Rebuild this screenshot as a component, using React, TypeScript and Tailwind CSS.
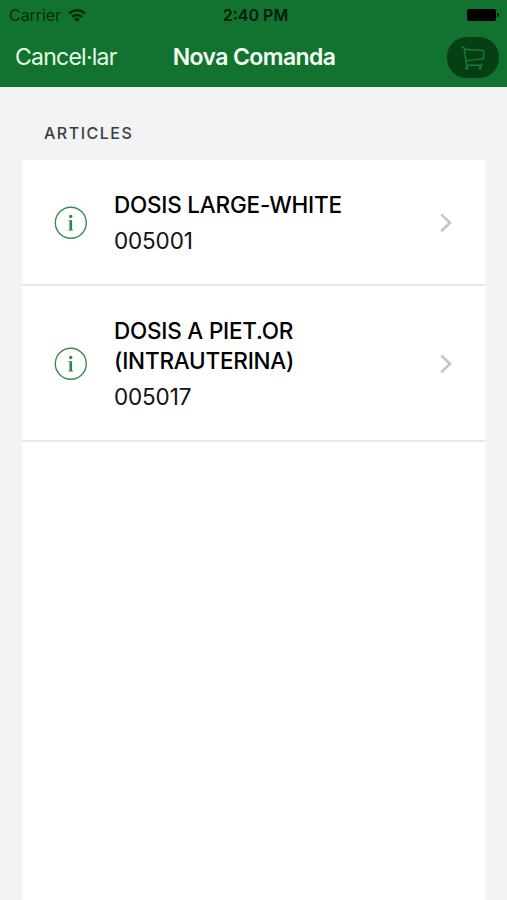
import React from 'react';

/**
 * Row of the articles list
 */
interface ArticleRowProps {
  lines: string[];
  code: string;
}

const InfoIcon = () => (
  <svg className="w-[34px] h-[34px] shrink-0" viewBox="0 0 34 34" fill="none">
    <circle cx="16.8" cy="16.8" r="15.5" stroke="#348c4c" strokeWidth="1.4" />
    <circle cx="16.7" cy="10.4" r="1.7" fill="#2b8544" />
    <path d="M14.4 14.2H18.1V23.8H19.2V24.6H14.2V23.8H15.5V15.1H14.4Z" fill="#2b8544" />
  </svg>
);

const Chevron = () => (
  <svg className="w-3 h-5 shrink-0" viewBox="0 0 12 20" fill="none">
    <path d="M1.2 1.4L10 9.8L1.2 18.2" stroke="#c6c6c8" strokeWidth="2.6" />
  </svg>
);

const ArticleRow: React.FC<ArticleRowProps> = ({ lines, code }) => {
  return (
    <li className="flex items-center border-b-2 border-[#e8e8e9] pl-8 pr-[33px] pt-[30px] pb-7">
      <InfoIcon />
      <div className="ml-[26px] grow">
        <h3 className="text-[22.5px] leading-[30px] font-medium tracking-[-0.22px] text-black">
          {lines.map((line) => (
            <span key={line} className="block whitespace-nowrap">{line}</span>
          ))}
        </h3>
        <p className="mt-1.5 text-[22.5px] leading-[30px] tracking-[-0.15px] text-[#111111]">{code}</p>
      </div>
      <Chevron />
    </li>
  );
};

const StatusBar = () => (
  <div className="grid grid-cols-3 items-center h-[30px] pl-[9px] pr-2 text-[#022d0c]">
    <div className="flex items-center gap-[7px]">
      <span className="text-base tracking-[-0.05px]">Carrier</span>
      <svg className="w-[18px] h-[13px]" viewBox="0 0 18 13" fill="none" stroke="currentColor" strokeWidth="2.4">
        <path d="M1 4.6C5.4 0.1 12.6 0.1 17 4.6" />
        <path d="M4 8.1C6.8 5.3 11.2 5.3 14 8.1" />
        <path d="M9 12.8L6 9.9C7.7 8.3 10.3 8.3 12 9.9Z" fill="currentColor" stroke="none" />
      </svg>
    </div>
    <span className="pl-[3px] text-center text-base font-semibold text-[#011c07]">2:40 PM</span>
    <div className="flex items-center justify-end gap-px">
      <div className="w-[29px] h-3 rounded-[2px] bg-black" />
      <div className="w-[2px] h-1 rounded-r-full bg-black" />
    </div>
  </div>
);

const NavBar = () => (
  <div className="grid grid-cols-[1fr_auto_1fr] items-center h-[55px] pl-[9px] pr-2">
    <button className="pl-[6px] pb-0.5 text-left text-[23px] leading-7 tracking-[-0.75px] text-[#e6fbe4]">Cancel·lar</button>
    <h1 className="pb-0.5 text-[23px] leading-7 font-semibold tracking-[-0.6px] text-[#f3fff2]">Nova Comanda</h1>
    <button className="justify-self-end flex items-center justify-center w-[52px] h-[41px] rounded-[20px] bg-[#053f13]">
      <svg className="w-6 h-6" viewBox="0 0 24 24" fill="none" stroke="#1a7c38" strokeWidth="1.4">
        <path d="M0.4 0.8L3 1.4L5.6 19.2H22" />
        <path d="M3.4 3.2L22.6 4.6V12.6L5 14.9" />
        <circle cx="5.8" cy="22" r="1.1" />
        <circle cx="19.2" cy="22" r="1.1" />
      </svg>
    </button>
  </div>
);

const App = () => {
  return (
    <div className="flex flex-col h-[900px] w-[507px] overflow-hidden bg-[#f1f3f5] font-['Inter',sans-serif]">
      <header className="h-[87px] shrink-0 bg-[#127331]">
        <StatusBar />
        <NavBar />
      </header>
      <main className="flex flex-col grow px-[22px]">
        <h2 className="h-[73px] pl-[22px] pt-[35px] text-base leading-[22px] font-medium tracking-[1.5px] text-[#3d3d40]">
          ARTICLES
        </h2>
        <ul className="grow bg-white">
          <ArticleRow lines={['DOSIS LARGE-WHITE']} code="005001" />
          <ArticleRow lines={['DOSIS A PIET.OR', '(INTRAUTERINA)']} code="005017" />
        </ul>
      </main>
    </div>
  );
};

export default App;
